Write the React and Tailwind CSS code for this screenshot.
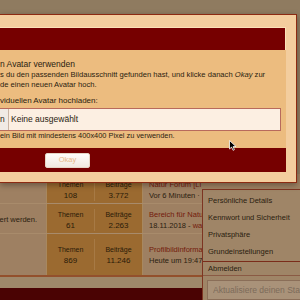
const font = "font-['Liberation_Sans',Arial,sans-serif]"

const rows = [
  { h: 'h-[29px]', left: '', topics: '108', posts: '3.772', title: 'Natur Forum [Li', meta: 'Vor 6 Minuten · ', metaRed: 'H' },
  { h: 'h-[30px]', left: 'ert werden.', topics: '61', posts: '2.263', title: 'Bereich für Natur', meta: '18.11.2018 - ', metaRed: 'wal' },
  { h: 'h-[42px]', left: '', topics: '869', posts: '11.246', title: 'Profilbildinformat', meta: 'Heute um 19:47', metaRed: '' },
]

const menu = ['Persönliche Details', 'Kennwort und Sicherheit', 'Privatsphäre', 'Grundeinstellungen']

function Stat({ label, value, divider }) {
  return (
    <div className={`flex-1 flex flex-col items-center justify-center leading-[11px] ${divider ? 'border-l border-[#a77a45]' : ''}`}>
      <span className="text-[7px]">{label}</span>
      <span className="text-[8px]">{value}</span>
    </div>
  )
}

export default function App() {
  return (
    <div className={`relative w-[300px] h-[300px] overflow-hidden bg-[#8f7b60] ${font}`}>
      {/* Forum-Tabelle im Hintergrund (abgedunkelt) */}
      <div className="flex flex-col">
        <div className="h-[174px]" />
        {rows.map((r, i) => (
          <div key={i} className={`grid grid-cols-[46px_96px_1fr] ${r.h} ${i > 0 ? 'border-t border-[#a88b6b]' : ''}`}>
            <div className="bg-[#9e8062] flex items-center justify-end pr-[9px] text-[7.5px] text-[#2a1d10] whitespace-nowrap overflow-hidden">
              {r.left}
            </div>
            <div className="bg-[#9b6a30] border-l border-[#a8885f] flex py-[5px] text-[#2a1a08]">
              <Stat label="Themen" value={r.topics} />
              <Stat label="Beiträge" value={r.posts} divider />
            </div>
            <div className="bg-[#9e8062] border-l border-[#a8885f] pl-[6px] flex flex-col justify-center leading-[11px] text-[7.5px] whitespace-nowrap">
              <span className="text-[#731a0c]">{r.title}</span>
              <span className="text-[#2a1d10]">
                {r.meta}<span className="text-[#731a0c]">{r.metaRed}</span>
              </span>
            </div>
          </div>
        ))}
        <div className="h-[2px] bg-[#93502c]" />
        <div className="h-[11px] bg-[#9e886a]" />
        <div className="h-[13px] bg-[#4a0303]" />
      </div>

      {/* Benutzermenü */}
      <div className="absolute left-[202px] top-[189px] right-0 bottom-0 bg-[#9f8567] border-l border-t border-[#7d3522] flex flex-col text-[7.5px] text-[#2a1d10]">
        <div className="flex flex-col pt-[2px]">
          {menu.map(m => (
            <div key={m} className="h-[17px] flex items-center pl-[5px]">{m}</div>
          ))}
        </div>
        <div className="h-px bg-[#7a2c1a] mt-[1px]" />
        <div className="h-[16px] flex items-center pl-[5px]">Abmelden</div>
        <div className="h-px bg-[#8a5a44]" />
        <div className="pl-[4px] pt-[4px]">
          <input
            readOnly
            placeholder="Aktualisiere deinen Status..."
            className="w-[120px] h-[20px] bg-[#a99279] border border-[#8a6e58] pl-[5px] text-[8.5px] outline-none placeholder:text-[#7c6b59]"
          />
        </div>
      </div>

      {/* Avatar-Dialog */}
      <div className="absolute left-0 top-[14px] w-[297px] h-[169px] bg-[#f3cd9e] border border-l-0 border-[#8c2a12] pt-[12px] pr-[10px] pb-[10px] shadow-[0_2px_6px_rgba(0,0,0,0.35)] flex flex-col">
        <div className="h-[23px] bg-[#760000] border-t border-r border-[#fbe0b8]" />
        <div className="h-[98px] bg-[#ecbc7f] text-[#2b1d10] flex flex-col whitespace-nowrap">
          <div className="mt-[9px] text-[8.5px] leading-[11px]">n Avatar verwenden</div>
          <div className="text-[7.6px] leading-[10px]">
            s du den passenden Bildausschnitt gefunden hast, und klicke danach <i>Okay</i> zur
          </div>
          <div className="text-[7.6px] leading-[10px]">de einen neuen Avatar hoch.</div>
          <div className="mt-[6px] text-[8px] leading-[10px]">viduellen Avatar hochladen:</div>
          <div className="mt-[2px] mr-[5px] h-[23px] bg-[#fcefe2] border border-[#b86a5c] border-l-0 flex items-center text-[8.5px]">
            <div className="h-full w-[9px] bg-[#f1ebe5] border-r border-[#c9b5a5] flex items-center">n</div>
            <span className="ml-[2px]">Keine ausgewählt</span>
          </div>
          <div className="text-[7.4px] leading-[10px]">ein Bild mit mindestens 400x400 Pixel zu verwenden.</div>
        </div>
        <div className="h-[24px] bg-[#760000] flex items-center">
          <button className="ml-[45px] w-[45px] h-[15px] rounded-[2px] border border-[#e6d6c6] bg-gradient-to-b from-[#fffdfb] to-[#f1e9e0] text-[7.5px] text-[#e8b98a]">
            Okay
          </button>
        </div>
      </div>

      {/* Mauszeiger */}
      <svg className="absolute left-[229px] top-[140px]" width="8" height="11" viewBox="0 0 8 11">
        <path d="M0.5 0.5 L0.5 9 L2.6 7.1 L4 10.3 L5.4 9.7 L4.1 6.6 L7 6.6 Z" fill="#000" stroke="#fff" strokeWidth="0.8" />
      </svg>
    </div>
  )
}
